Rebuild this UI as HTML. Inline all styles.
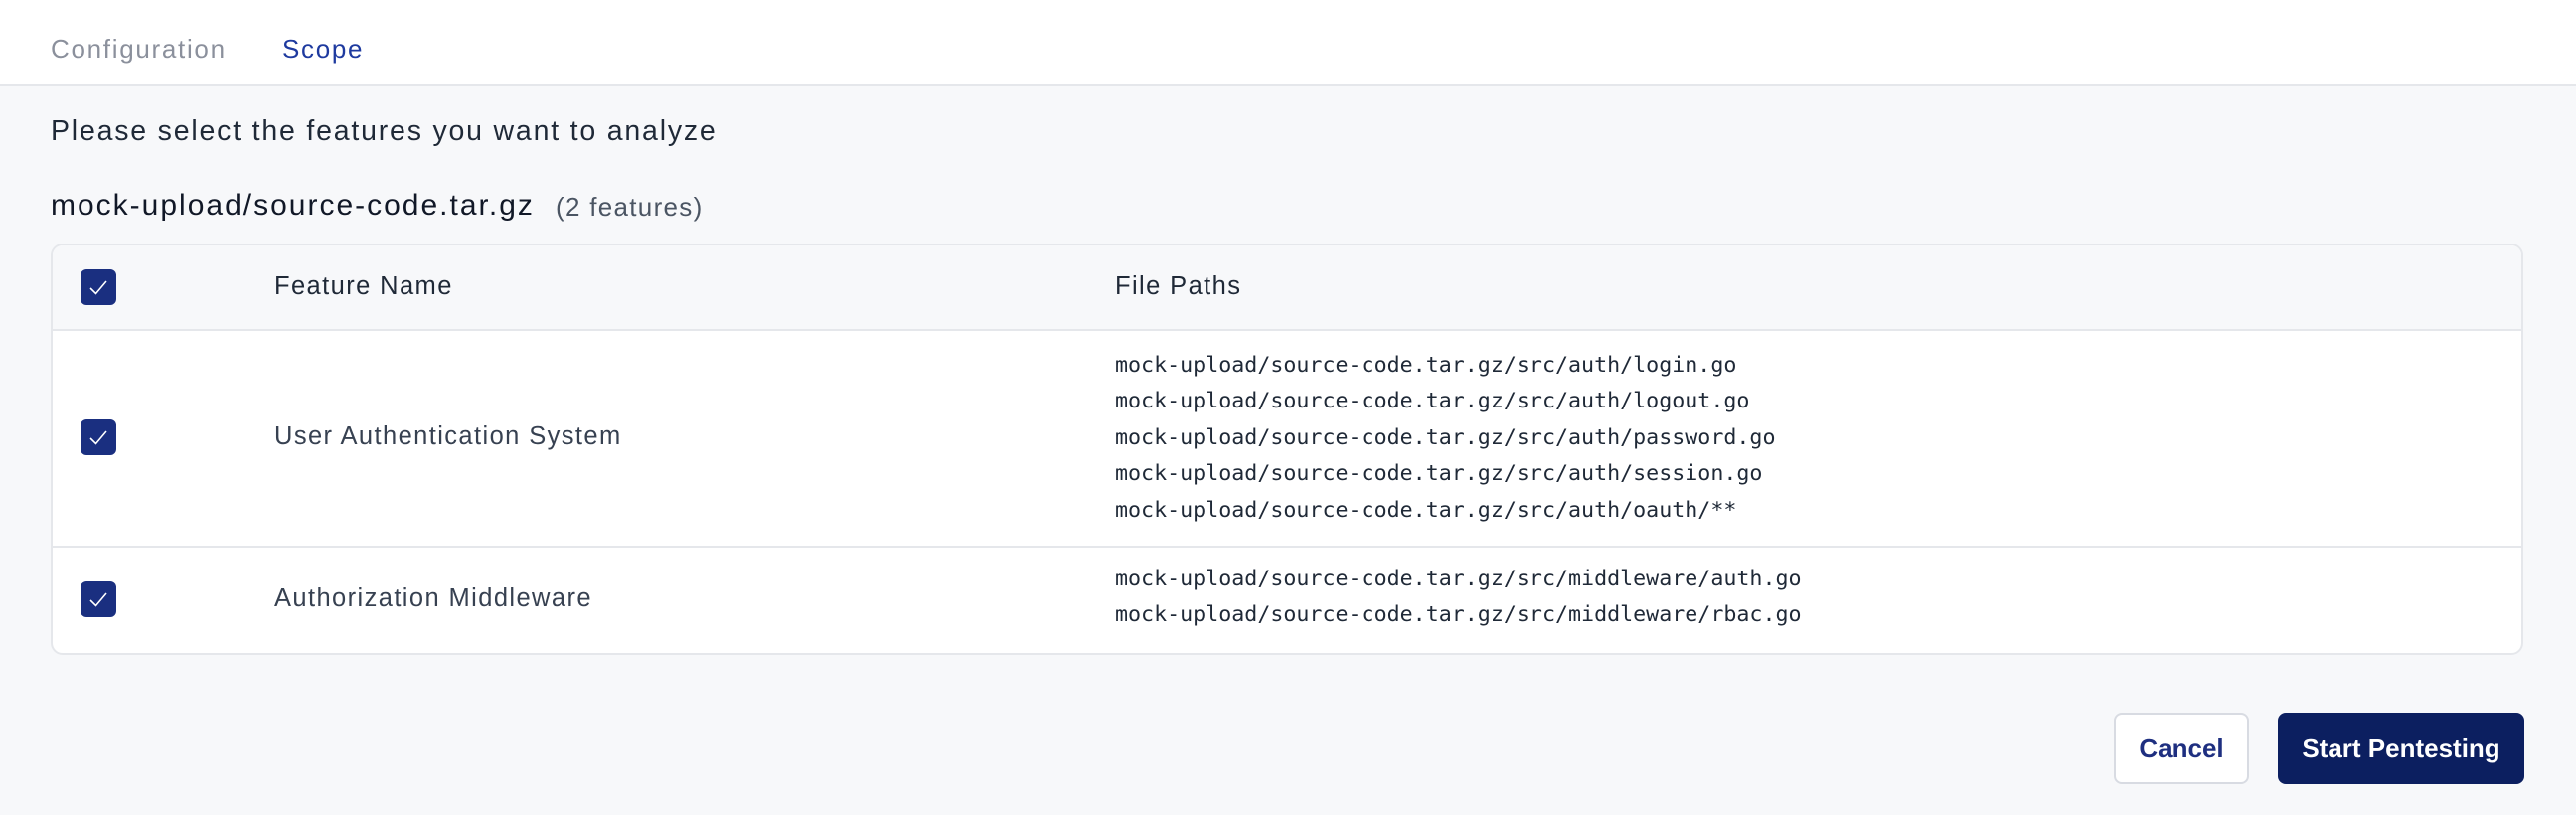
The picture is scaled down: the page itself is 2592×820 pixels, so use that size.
<!DOCTYPE html>
<html><head><style>
*{margin:0;padding:0;box-sizing:border-box}
body{width:2592px;height:820px;background:#f7f8fa;font-family:"Liberation Sans",sans-serif;color:#1f2937;position:relative;overflow:hidden}
.hdr{position:absolute;left:0;top:0;width:2592px;height:87px;background:#fff;border-bottom:2px solid #e5e7eb}
.t{position:absolute;font-size:26px;top:34px;letter-spacing:1.7px}
.abs{position:absolute;white-space:nowrap}
.tbl{position:absolute;left:51px;top:245px;width:2488px;height:414px;border:2px solid #e5e7eb;border-radius:12px;background:#fff;overflow:hidden}
.th{position:absolute;left:0;top:0;width:100%;height:86px;background:#f7f8fa;border-bottom:2px solid #e5e7eb}
.r2{position:absolute;left:0;top:302px;width:100%;height:2px;background:#e5e7eb}
.cb{position:absolute;left:28px;width:36px;height:36px;background:#1a2f80;border-radius:6px}
.cb svg{position:absolute;left:7px;top:7px}
.mono{font-family:"DejaVu Sans Mono","Liberation Mono",monospace;font-size:21.65px;color:#1f2937}
.lbl{font-size:25.5px;color:#374151;letter-spacing:1.4px}
.btn{position:absolute;top:717px;height:72px;border-radius:8px;font-weight:bold;font-size:26px;display:flex;align-items:center;justify-content:center}
</style></head><body>
<div class="hdr">
<div class="t" style="left:51px;color:#8b909c">Configuration</div>
<div class="t" style="left:284px;color:#1e3a9f">Scope</div>
</div>
<div class="abs" style="left:51px;top:116px;font-size:28.5px;letter-spacing:1.8px;color:#1f2937">Please select the features you want to analyze</div>
<div class="abs" style="left:51px;top:190px;font-size:30px;letter-spacing:2px;color:#111827">mock-upload/source-code.tar.gz</div>
<div class="abs" style="left:559px;top:193px;font-size:26px;letter-spacing:1.3px;color:#4b5563">(2 features)</div>
<div class="tbl">
<div class="th"></div>
<div class="r2"></div>
<div class="cb" style="top:24px"><svg width="22" height="22" viewBox="0 0 22 22"><path d="M3 12 L8.5 17.5 L19 5" stroke="#fff" stroke-width="1.6" fill="none"/></svg></div>
<div class="abs lbl" style="left:223px;top:27px;color:#1f2937">Feature Name</div>
<div class="abs lbl" style="left:1069px;top:27px;color:#1f2937">File Paths</div>
<div class="cb" style="top:175px"><svg width="22" height="22" viewBox="0 0 22 22"><path d="M3 12 L8.5 17.5 L19 5" stroke="#fff" stroke-width="1.6" fill="none"/></svg></div>
<div class="abs lbl" style="left:223px;top:178px">User Authentication System</div>
<div class="abs mono" style="left:1069px;top:103px;line-height:36.4px">mock-upload/source-code.tar.gz/src/auth/login.go<br>mock-upload/source-code.tar.gz/src/auth/logout.go<br>mock-upload/source-code.tar.gz/src/auth/password.go<br>mock-upload/source-code.tar.gz/src/auth/session.go<br>mock-upload/source-code.tar.gz/src/auth/oauth/**</div>
<div class="cb" style="top:338px"><svg width="22" height="22" viewBox="0 0 22 22"><path d="M3 12 L8.5 17.5 L19 5" stroke="#fff" stroke-width="1.6" fill="none"/></svg></div>
<div class="abs lbl" style="left:223px;top:341px">Authorization Middleware</div>
<div class="abs mono" style="left:1069px;top:318px;line-height:36.4px">mock-upload/source-code.tar.gz/src/middleware/auth.go<br>mock-upload/source-code.tar.gz/src/middleware/rbac.go</div>
</div>
<div class="btn" style="left:2127px;width:136px;background:#fff;border:2px solid #d8dbe2;color:#1e2f80">Cancel</div>
<div class="btn" style="left:2292px;width:248px;background:#0c1f60;color:#fff">Start Pentesting</div>
</body></html>
